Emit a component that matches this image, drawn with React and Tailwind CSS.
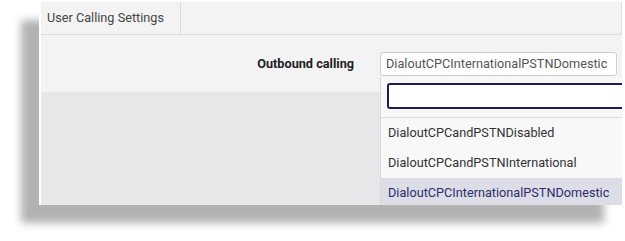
import React from "react";

const options = [
  "DialoutCPCandPSTNDisabled",
  "DialoutCPCandPSTNInternational",
  "DialoutCPCInternationalPSTNDomestic",
];

export default function App() {
  const selected = "DialoutCPCInternationalPSTNDomestic";

  return (
    <div
      className="w-[625px] h-[241px] bg-white pt-[2px] pl-[39px] overflow-hidden"
      style={{ fontFamily: "Roboto, 'Liberation Sans', sans-serif" }}
    >
      <div className="relative w-[583px] h-[203px] overflow-hidden bg-[#e6e7e9] border-l-2 border-white shadow-[-18px_18px_8px_rgba(0,0,0,0.3)]">
        {/* Tabs */}
        <div className="flex h-[33px] bg-[#f3f3f3] border-b border-[#dcdcdc]">
          <div className="w-[140px] h-full flex items-center pl-[6px] border-r border-[#dcdcdc] text-[12.7px] text-[#444]">
            User Calling Settings
          </div>
          <div className="flex-1 border-r border-[#e0e0e0]" />
        </div>

        {/* Form row */}
        <div className="flex items-center h-[57px] bg-[#f3f3f3]">
          <div className="w-[313px] text-right text-[12.7px] font-bold text-[#222]">
            Outbound calling
          </div>
          <div className="ml-[26px] w-[237px] h-[24px] flex items-center pl-[5px] bg-white border border-[#cfcfcf] rounded-[3px] text-[12.7px] text-[#555] whitespace-nowrap overflow-hidden">
            {selected}
          </div>
        </div>

        {/* Dropdown */}
        <div className="absolute left-[339px] top-[75px] w-[244px] bottom-0 bg-[#f8f8f8] border-l border-[#d8d8d8]">
          <div className="pt-[6px] pl-[6px] pb-[8px] border-b border-[#dedede]">
            <div className="h-[26px] w-[240px] bg-white border-2 border-[#1c1c5c] rounded-[3px]" />
          </div>
          {options.map((opt) => (
            <div
              key={opt}
              className={
                opt === selected
                  ? "h-[30px] flex items-center pl-[7px] text-[12.7px] text-[#2d2d6b] bg-[#dcdde6] whitespace-nowrap"
                  : "h-[30px] flex items-center pl-[7px] text-[12.7px] text-[#333] whitespace-nowrap"
              }
            >
              {opt}
            </div>
          ))}
        </div>
      </div>
    </div>
  );
}
